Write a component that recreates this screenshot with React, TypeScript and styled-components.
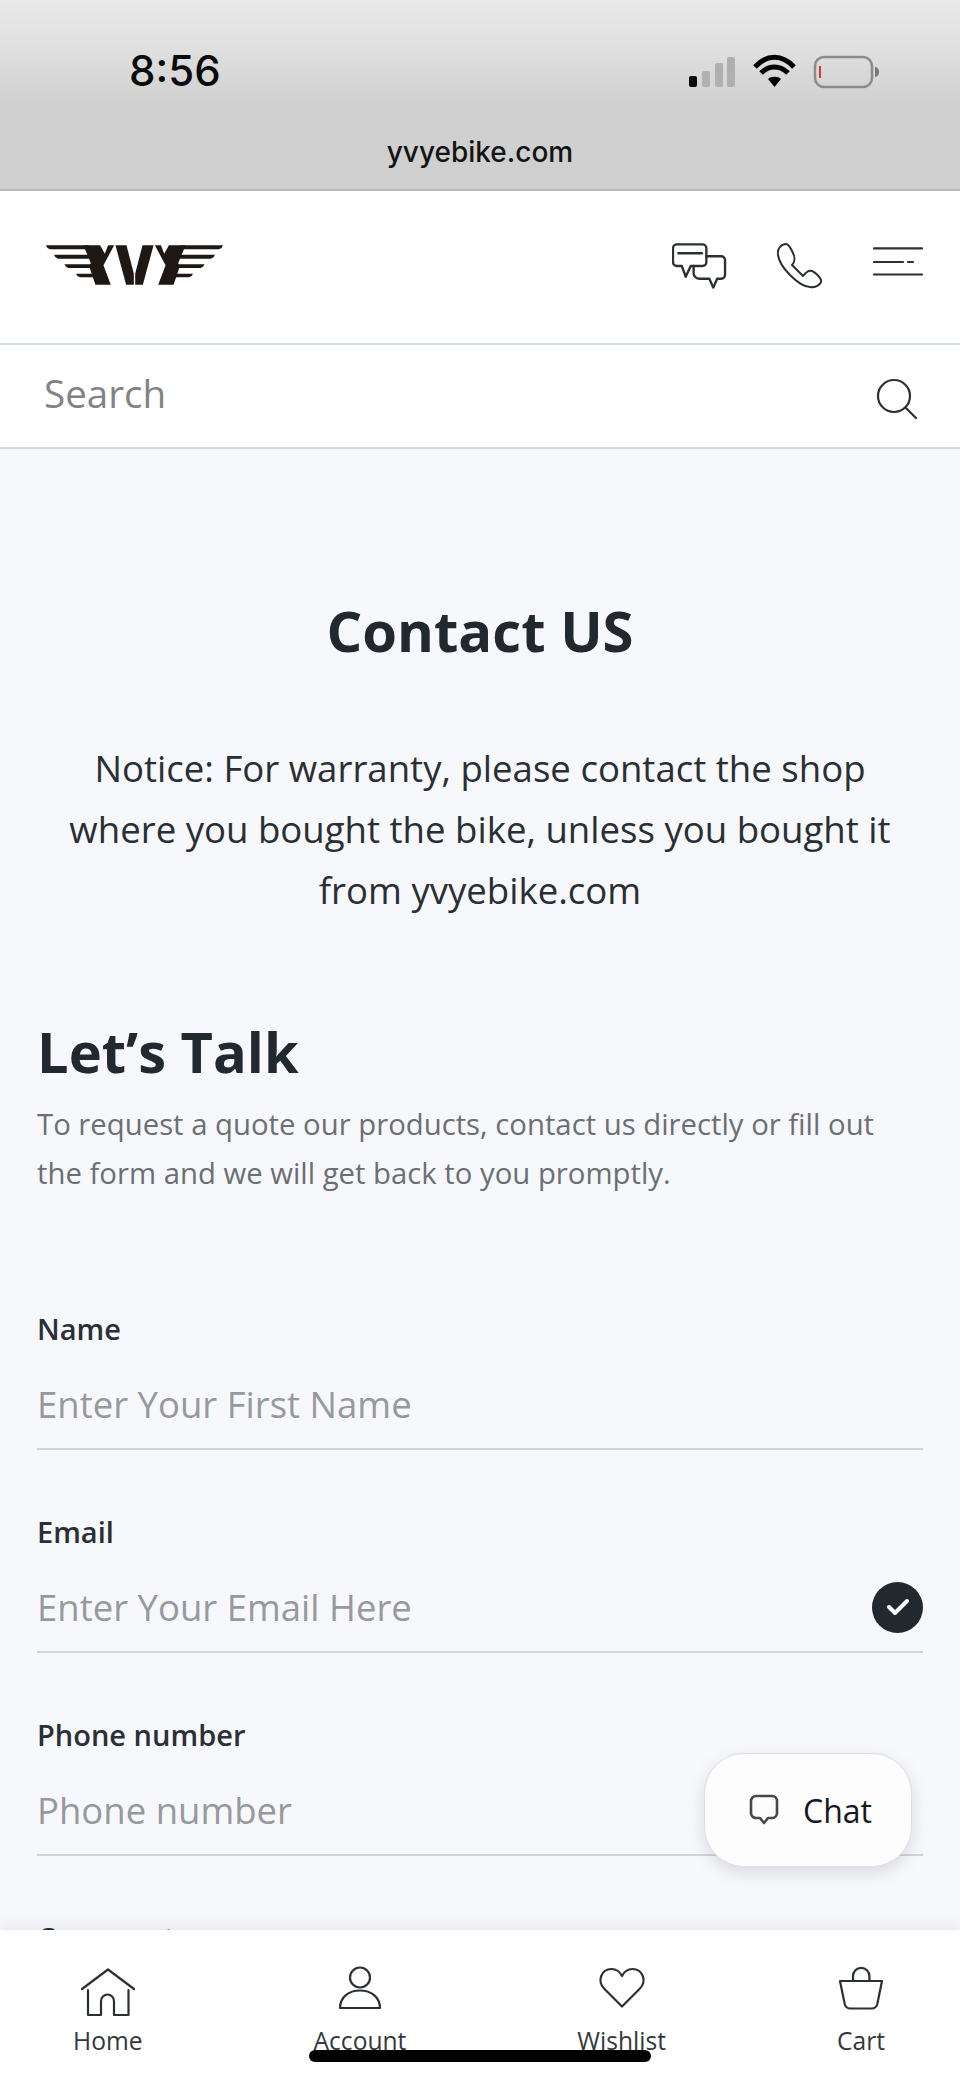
import React from "react";
import styled, { createGlobalStyle } from "styled-components";

const Global = createGlobalStyle`
  html, body { margin: 0; padding: 0; background: #f6f8fc; }
  * { box-sizing: border-box; }
`;

const Page = styled.div`
  width: 960px;
  height: 2082px;
  position: relative;
  display: flex;
  flex-direction: column;
  overflow: hidden;
  background: #f6f8fc;
  font-family: "Open Sans", "Liberation Sans", sans-serif;
  color: #21282e;
`;

const StatusBar = styled.header`
  height: 191px;
  flex: none;
  border-bottom: 2px solid #b8b8b8;
  background: linear-gradient(#e9e9e9 0%, #e0e0e0 25%, #d0d0d0 55%, #cfcfcf 100%);
  display: grid;
  grid-template-rows: 104px 1fr;
  padding: 0 81px 0 129px;
`;

const StatusTop = styled.div`
  display: flex;
  justify-content: space-between;
  align-items: flex-start;
  padding-top: 48px;
`;

const Clock = styled.div`
  font-family: "Inter", "Liberation Sans", sans-serif;
  font-size: 42px;
  line-height: 46px;
  font-weight: 500;
  color: #0a0a0a;
`;

const StatusIcons = styled.div`
  display: flex;
  align-items: flex-start;
  padding-top: 6px;
`;

const Url = styled.div`
  font-family: "Inter", "Liberation Sans", sans-serif;
  font-size: 28px;
  line-height: 36px;
  font-weight: 500;
  color: #141414;
  text-align: center;
  margin-left: -48px;
  margin-top: 30px;
`;

const TopBar = styled.div`
  height: 154px;
  flex: none;
  background: #fff;
  border-bottom: 2px solid #d4dde3;
  padding: 51px 37px 0 46px;
  display: flex;
  justify-content: space-between;
  align-items: flex-start;
`;

const Logo = styled.svg`
  width: 177px;
  height: 42px;
  margin-top: 2px;
`;

const TopIcons = styled.div`
  display: flex;
  align-items: flex-start;
`;

const SearchBar = styled.div`
  height: 104px;
  flex: none;
  background: #fff;
  border-bottom: 2px solid #d3d8e0;
  padding: 0 42px 0 44px;
  display: flex;
  justify-content: space-between;
  align-items: center;
`;

const SearchText = styled.span`
  font-size: 38.6px;
  font-weight: 400;
  color: #838383;
  margin-top: -7px;
`;

const SearchGlyph = styled.svg`
  margin-top: 4px;
`;

const Main = styled.main`
  flex: 1;
  min-height: 0;
  overflow: hidden;
  padding: 143px 37px 0;
`;

const Title = styled.h1`
  margin: 0;
  font-size: 56.2px;
  line-height: 76px;
  font-weight: 700;
  text-align: center;
  color: #21282e;
`;

const Notice = styled.p`
  margin: 70px 0 0;
  padding: 0 20px;
  font-size: 36.6px;
  font-weight: 400;
  line-height: 61px;
  text-align: center;
  color: #2a2f33;
`;

const Heading = styled.h2`
  margin: 92px 0 0;
  font-size: 56px;
  line-height: 76px;
  font-weight: 700;
  color: #21282e;
`;

const Lead = styled.p`
  margin: 11px 0 0;
  font-size: 29.3px;
  font-weight: 400;
  line-height: 49px;
  color: #6b6f73;
`;

const Form = styled.form`
  margin-top: 111px;
  display: flex;
  flex-direction: column;
  gap: 62px;
`;

const Field = styled.div`
  display: flex;
  flex-direction: column;
`;

const Label = styled.label`
  font-size: 29px;
  line-height: 40px;
  font-weight: 600;
  color: #2a3036;
`;

const InputRow = styled.div`
  margin-top: 25px;
  height: 76px;
  padding-bottom: 14px;
  border-bottom: 2px solid #d2d4d8;
  display: flex;
  justify-content: space-between;
  align-items: center;
`;

const Placeholder = styled.span`
  font-size: 36.5px;
  font-weight: 400;
  line-height: 60px;
  color: #97999d;
`;

const CheckBadge = styled.span`
  width: 51px;
  height: 51px;
  border-radius: 50%;
  background: #21282e;
  display: flex;
  align-items: center;
  justify-content: center;
`;

const ChatButton = styled.button`
  position: absolute;
  left: 704px;
  top: 1753px;
  width: 208px;
  height: 114px;
  padding: 0 0 0 44px;
  border: 1px solid #dedfe2;
  border-radius: 40px;
  background: #fdfdfe;
  box-shadow: 0 6px 18px rgba(0, 0, 0, 0.12);
  display: flex;
  align-items: center;
  gap: 24px;
  font-family: "Open Sans", sans-serif;
  font-size: 32px;
  color: #16191c;
`;

const BottomNav = styled.nav`
  height: 152px;
  flex: none;
  position: relative;
  background: #fff;
  box-shadow: 0 -6px 14px rgba(0, 0, 0, 0.06);
  padding: 36px 75px 0 73px;
  display: flex;
  justify-content: space-between;
  align-items: flex-start;
`;

const NavItem = styled.a`
  display: flex;
  flex-direction: column;
  align-items: center;
  font-size: 24.6px;
  line-height: 32px;
  color: #33383c;
`;

const NavLabel = styled.span`
  margin-top: 15px;
`;

const NavGlyph = styled.svg`
  width: 40px;
  height: 44px;
  overflow: visible;
`;

const HomeIndicator = styled.div`
  position: absolute;
  left: 309px;
  top: 2050px;
  width: 342px;
  height: 12px;
  border-radius: 6px;
  background: #000;
`;

const stroke = { fill: "none", stroke: "#2b3034", strokeWidth: 2.2, strokeLinejoin: "round" as const, strokeLinecap: "round" as const };

const navIcons: Record<string, { cx: number; body: React.ReactNode }> = {
  Home: {
    cx: 107,
    body: (
      <g {...stroke}>
        <path d="M81 99 L107 79.5 L133 99" />
        <path d="M87 101 V126 H100 V112 a6.5 6.5 0 0 1 13 0 V126 H127.5 V101" transform="translate(0,-1)" />
      </g>
    ),
  },
  Account: {
    cx: 360,
    body: (
      <g {...stroke}>
        <circle cx="360" cy="87.5" r="10" />
        <path d="M340 118 C340 107 349 100.5 360 100.5 C371 100.5 380 107 380 118 Z" />
      </g>
    ),
  },
  Wishlist: {
    cx: 142.5,
    body: (
      <g {...stroke}>
        <path d="M142.5 116.5 L125 99 C117 91 122 79 132 79 C137 79 140.5 82 142.5 86 C144.5 82 148 79 153 79 C163 79 168 91 160 99 Z" />
      </g>
    ),
  },
  Cart: {
    cx: 381.5,
    body: (
      <g {...stroke}>
        <path d="M360.5 91 H402.5 L398 113 a6 6 0 0 1 -6 5.5 H371 a6 6 0 0 1 -6 -5.5 Z" />
        <path d="M373.5 91 V86 a8.2 8.2 0 0 1 16.4 0 V91" />
      </g>
    ),
  },
};

function NavEntry({ name }: { name: string }) {
  const icon = navIcons[name];
  return (
    <NavItem>
      <NavGlyph viewBox={`${icon.cx - 20} 76 40 44`}>{icon.body}</NavGlyph>
      <NavLabel>{name}</NavLabel>
    </NavItem>
  );
}

function FormField({ label, placeholder, checked }: { label: string; placeholder: string; checked?: boolean }) {
  return (
    <Field>
      <Label>{label}</Label>
      <InputRow>
        <Placeholder>{placeholder}</Placeholder>
        {checked && (
          <CheckBadge>
            <svg width="28" height="22" viewBox="0 0 28 22">
              <path d="M5 11 L11 17 L23 5" fill="none" stroke="#fff" strokeWidth="4" strokeLinecap="round" strokeLinejoin="round" />
            </svg>
          </CheckBadge>
        )}
      </InputRow>
    </Field>
  );
}

const logoHalf = (
  <>
    <path d="M78 65 H205 L212 77 H90 Q80 74 78 65 Z" />
    <path d="M102 93 H222 L226 105 H114 Q104 101 102 93 Z" />
    <path d="M133 122 H222 L226 133 H146 Q136 130 133 122 Z" />
    <path d="M168 150 H225 L225 161 H180 Q170 158 168 150 Z" />
    <path d="M190 65 H240 L254 90 L264 65 H282 L250 125 L272 183 H226 L208 130 L212 118 Z" />
    <path d="M286 65 H319 L341 150 V183 H318 Z" />
  </>
);

export default function App() {
  return (
    <Page>
      <Global />
      <StatusBar>
        <StatusTop>
          <Clock>8:56</Clock>
          <StatusIcons>
            <svg width="190" height="36" viewBox="689 53 190 36">
              <rect x="689" y="75" width="8" height="11" rx="2" fill="#0a0a0a" />
              <rect x="702" y="70" width="8" height="16" rx="2" fill="#b0b0b0" />
              <rect x="715" y="62" width="8" height="24" rx="2" fill="#b0b0b0" />
              <rect x="727" y="56" width="8" height="30" rx="2" fill="#b0b0b0" />
              <path d="M755 66 C767 53 782 53 794 66" fill="none" stroke="#000" strokeWidth="5" />
              <path d="M761 72 C769 64 780 64 788 72" fill="none" stroke="#000" strokeWidth="5" />
              <path d="M768 78 C771 75 778 75 781 78 L774.5 86 Z" fill="#000" />
              <rect x="815" y="56" width="57" height="30" rx="9" fill="none" stroke="#8b8b8b" strokeWidth="2.5" />
              <rect x="819" y="65" width="2" height="12" fill="#e5322d" />
              <path d="M875 66 a4 5 0 0 1 0 10 Z" fill="#777" />
            </svg>
          </StatusIcons>
        </StatusTop>
        <Url>yvyebike.com</Url>
      </StatusBar>

      <TopBar>
        <Logo viewBox="78 62 530 124" aria-label="YVY">
          <g fill="#1f1714">
            {logoHalf}
            <g transform="translate(686,0) scale(-1,1)">{logoHalf}</g>
          </g>
        </Logo>
        <TopIcons>
          <svg width="55" height="50" viewBox="30 22 56 50">
            <g fill="none" stroke="#2b3034" strokeWidth="2.4" strokeLinejoin="round" strokeLinecap="round">
              <path d="M35 24 H61 a4 4 0 0 1 4 4 V42 a4 4 0 0 1 -4 4 H49 L44 57 L40 46 H35 a4 4 0 0 1 -4 -4 V28 a4 4 0 0 1 4 -4 Z" />
              <path d="M36.5 33 H60.5" />
              <path d="M65 36 H80 a4 4 0 0 1 4 4 V55 a4 4 0 0 1 -4 4 H76 L72 68 L68 59 H58 a6 6 0 0 1 -6 -7 V46" />
            </g>
          </svg>
          <svg style={{ marginLeft: 50 }} width="46" height="48" viewBox="137 25 46 48">
            <path d="M146 27 C141 27 137 32 138 38 C139 45 145 53 150 58 C156 64 163 70 170 70 C176 71 182 67 181 63 C180 60 175 55 172 54 C169 53 166 55 163 59 L152 48 C155 45 155 40 153 36 C151 32 149 27 146 27 Z" fill="none" stroke="#2b3034" strokeWidth="2" strokeLinejoin="round" />
          </svg>
          <svg style={{ marginLeft: 50 }} width="50" height="40" viewBox="232 28 50 40">
            <g stroke="#2b3034" strokeWidth="2.2" strokeLinecap="round">
              <path d="M233 34.3 H281" />
              <path d="M233 48 H262" />
              <path d="M267 48 H272" />
              <path d="M233 60.5 H281" />
            </g>
          </svg>
        </TopIcons>
      </TopBar>

      <SearchBar>
        <SearchText>Search</SearchText>
        <SearchGlyph width="42" height="42" viewBox="875 378 42 42">
          <circle cx="893" cy="397" r="16" fill="none" stroke="#2b3034" strokeWidth="2.2" />
          <path d="M905 409 L915 419" stroke="#2b3034" strokeWidth="2.2" strokeLinecap="round" />
        </SearchGlyph>
      </SearchBar>

      <Main>
        <Title>Contact US</Title>
        <Notice>Notice: For warranty, please contact the shop where you bought the bike, unless you bought it from yvyebike.com</Notice>
        <Heading>Let’s Talk</Heading>
        <Lead>To request a quote our products, contact us directly or fill out the form and we will get back to you promptly.</Lead>
        <Form>
          <FormField label="Name" placeholder="Enter Your First Name" />
          <FormField label="Email" placeholder="Enter Your Email Here" checked />
          <FormField label="Phone number" placeholder="Phone number" />
          <FormField label="Comment" placeholder="Comment" />
        </Form>
      </Main>

      <BottomNav>
        <NavEntry name="Home" />
        <NavEntry name="Account" />
        <NavEntry name="Wishlist" />
        <NavEntry name="Cart" />
      </BottomNav>

      <ChatButton type="button">
        <svg width="30" height="32" viewBox="0 0 30 32">
          <path d="M7 2 H23 a5 5 0 0 1 5 5 V19 a5 5 0 0 1 -5 5 H19 L15 29 L11 24 H7 a5 5 0 0 1 -5 -5 V7 a5 5 0 0 1 5 -5 Z" fill="none" stroke="#45494d" strokeWidth="2.6" strokeLinejoin="round" />
        </svg>
        Chat
      </ChatButton>
      <HomeIndicator />
    </Page>
  );
}
